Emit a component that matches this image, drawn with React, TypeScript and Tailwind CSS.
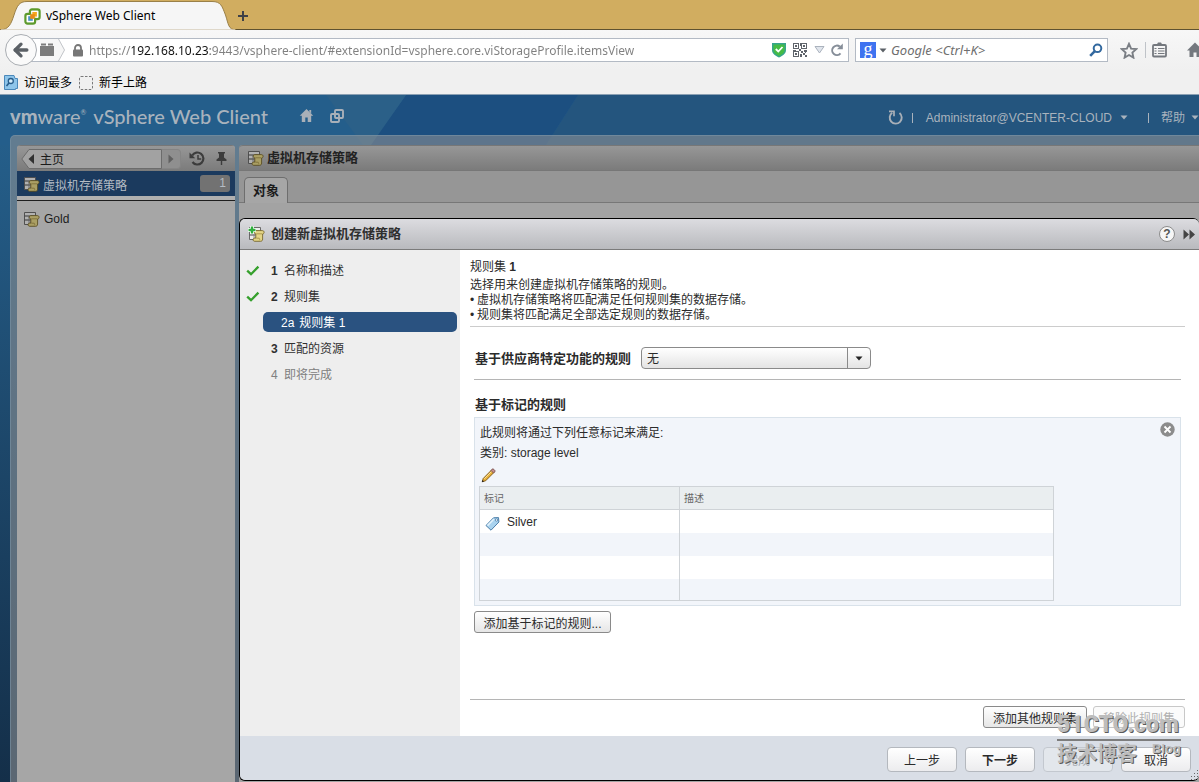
import React from "react";
import { ArrowLeft } from "lucide-react";

const UI = "font-['Liberation_Sans','Noto_Sans_CJK_SC',sans-serif]";
const CHROME = "font-['Noto_Sans','Noto_Sans_CJK_SC',sans-serif]";

function PolicyIcon({ add = false }: { add?: boolean }) {
  return (
    <svg
      width="17"
      height="16"
      viewBox="0 0 17 16"
      aria-hidden="true"
      className={add ? "shrink-0" : "shrink-0 brightness-75"}
    >
      <path d="M1.500 1.500h11v12h-11z" fill="#bdbdbd" stroke="#6a6a6a" />
      <path d="M2 2h10v2.500H2z" fill="#ececec" />
      <path d="M2 5.500h3v3H2zM2 9.500h3V13H2z" fill="#ececec" />
      <path d="M1.500 5h10M1.500 9h6" stroke="#5e5e5e" />
      <path
        d="M8 4.600h6.300c1.200 0 1.800.8 1.800 1.700S15.500 8 14.600 8v5c0 1.400-.7 2.300-2 2.300H6.800c-1.100 0-1.700-.7-1.700-1.600s.6-1.600 1.700-1.600h1V7.900c-1-.1-1.500-.8-1.500-1.600 0-1 .7-1.700 1.700-1.700z"
        fill="#e3d486"
        stroke="#6d5c22"
        strokeWidth=".8"
      />
      <path d="M8.300 12.200h2.900c.6.600.6 1.300.2 2M8.300 7.800h5.900" stroke="#a08c42" strokeWidth=".8" fill="none" />
      {add && (
        <>
          <path d="M4 0v8M0 4h8" stroke="#fff" strokeWidth="4" />
          <path d="M4 .5v7M.5 4h7" stroke="#2fae3e" strokeWidth="2.400" />
        </>
      )}
    </svg>
  );
}

function VsphereIcon() {
  return (
    <svg width="17" height="17" viewBox="0 0 17 17" aria-hidden="true">
      <rect x="6" y="1.5" width="9.5" height="9.5" rx="2" fill="#fff" stroke="#5d9a2c" strokeWidth="2.4" />
      <rect x="1.5" y="6" width="9.5" height="9.5" rx="2" fill="#fff" stroke="#5d9a2c" strokeWidth="2.4" />
      <path d="M7.200 2.700h7.100v7.100H10v4.500H2.700V7.200h4.500z" fill="#fff" />
      <rect x="8.300" y="4" width="4.600" height="4.600" fill="#f4a81d" />
      <rect x="4.200" y="8.200" width="4.600" height="4.600" fill="#4a93c6" />
      <rect x="6.200" y="6.200" width="4.600" height="4.600" fill="#e88d14" />
    </svg>
  );
}

function HomeGlyph({ size, color }: { size: number; color: string }) {
  return (
    <svg width={size} height={size} viewBox="0 0 16 16" aria-hidden="true">
      <path d="M8 1 0.8 8.2h2.2V15h3.7v-5h2.6v5H13V8.2h2.2z" fill={color} />
      <path d="M11 2h2v4l-2-2z" fill={color} />
    </svg>
  );
}

function Caret({ color }: { color: string }) {
  return (
    <svg width="8" height="5" viewBox="0 0 8 5" aria-hidden="true">
      <path d="M0.5 0.5h7L4 4.5z" fill={color} />
    </svg>
  );
}

function Check() {
  return (
    <svg width="14" height="12" viewBox="0 0 14 12" aria-hidden="true">
      <path d="M1.2 5.6 5 9.2 12.4 1.6" fill="none" stroke="#35a02c" strokeWidth="2.3" />
    </svg>
  );
}

function BrowserChrome() {
  return (
    <div className={`${CHROME} text-black`}>
      <div className="flex h-[30px] items-stretch border-b border-[#5f5230] bg-[#d1ad60]">
        <div className="relative h-[30px] w-[236px] shrink-0">
          <svg className="absolute inset-0" width="236" height="30" viewBox="0 0 236 30" aria-hidden="true">
            <path
              d="M0 30C9 29.500 11 24 14 15 17 6 19 1.500 27 1.500H212C221 1.500 222 6 225.500 15 228.500 24 228 29.500 236 30z"
              fill="#f6f6f6"
              stroke="#9a8048"
              strokeWidth="1"
            />
            <path d="M1 30.500H235" stroke="#f6f6f6" strokeWidth="2" />
          </svg>
          <div className="relative flex h-full items-center gap-[5px] pt-0.5 pl-6">
            <VsphereIcon />
            <span className="text-[12px] leading-4">vSphere Web Client</span>
          </div>
        </div>
        <button type="button" aria-label="新标签页" className="flex w-[14px] items-center justify-center pt-0.5">
          <svg width="12" height="12" viewBox="0 0 12 12" aria-hidden="true">
            <path d="M6 1v10M1 6h10" stroke="#3f4147" strokeWidth="2" />
          </svg>
        </button>
      </div>

      <div className="flex h-10 items-center overflow-hidden bg-linear-to-b from-[#f7f7f7] to-[#f0f0f0] pl-[5px]">
        <button
          type="button"
          aria-label="后退"
          className="z-10 flex size-8 shrink-0 items-center justify-center rounded-full border border-[#a9adb2] bg-[#fafafa]"
        >
          <ArrowLeft size={20} strokeWidth={4} color="#5b6066" />
        </button>
        <div className="-ml-2 flex h-6 min-w-0 flex-1 items-center border border-[#b3bac4] bg-white pl-[10px]">
          <svg width="26" height="22" viewBox="0 0 26 22" aria-hidden="true" className="shrink-0">
            <path d="M0 0h19l6 11-6 11H0z" fill="#f6f6f6" />
            <path d="M18.500 0 24.500 11l-6 11" fill="none" stroke="#c3c6ca" />
            <path d="M0 7h14v10H0zM1 4.500h5v2H1zM8 4.500h5v2H8z" fill="#7c7c7c" />
          </svg>
          <svg width="12" height="13" viewBox="0 0 12 13" aria-hidden="true" className="ml-[6px] shrink-0">
            <rect x="1" y="5.500" width="10" height="7" rx="1" fill="#777" />
            <path d="M3 6V4a3 3 0 0 1 6 0v2" fill="none" stroke="#777" strokeWidth="1.800" />
          </svg>
          <input
            aria-label="地址"
            readOnly
            value="https://192.168.10.23:9443/vsphere-client/#extensionId=vsphere.core.viStorageProfile.itemsView"
            className="ml-[5px] h-[22px] min-w-0 flex-1 bg-[linear-gradient(90deg,#808080_43px,#111_43px,#111_121px,#808080_121px)] bg-clip-text pt-px text-[12px] leading-5 text-transparent outline-none"
          />
          <div className="flex items-center gap-1 pr-1">
            <svg width="16" height="16" viewBox="0 0 16 16" aria-hidden="true">
              <path d="M1 1h14v7c0 4-4 6-7 7.500C5 14 1 12 1 8z" fill="#36a58c" />
              <path d="M2.500 2.500h11V8c0 3-3 4.800-5.500 6C5.500 12.800 2.500 11 2.500 8z" fill="#45bb45" />
              <path d="M4.800 7 7.300 9.500 11.500 5" fill="none" stroke="#fff" strokeWidth="1.800" />
            </svg>
            <svg width="14" height="14" viewBox="0 0 14 14" aria-hidden="true" shapeRendering="crispEdges" className="mx-[2px]">
              <path d="M.5.500h5v5h-5zM8.500.500h5v5h-5zM.5 8.500h5v5h-5z" fill="none" stroke="#5f646b" />
              <path d="M2 2h2v2H2zM10 2h2v2h-2zM2 10h2v2H2zM7 0h1v3H7zM6 6h2v2H6zM8 8h2v2H8zM11 7h3v2h-3zM10 10h2v2h-2zM12 12h2v2h-2zM7 11h2v3H7zM12 9h1v1h-1zM0 6.500h3v1H0z" fill="#5f646b" />
            </svg>
            <svg width="11" height="8" viewBox="0 0 11 8" aria-hidden="true" className="mx-px">
              <path d="M1 .500h9L5.500 7z" fill="#e0e5ec" stroke="#aab2bd" />
            </svg>
            <svg width="14" height="14" viewBox="0 0 14 14" aria-hidden="true">
              <path d="M10.500 10.300A4.700 4.700 0 1 1 9.800 3.600" fill="none" stroke="#868e99" strokeWidth="2" />
              <path d="M7 6.200h5.800V.500z" fill="#868e99" />
            </svg>
          </div>
        </div>
        <label className="ml-[6px] flex h-6 w-[253px] shrink-0 items-center border border-[#b3bac4] bg-white pr-1 pl-1">
          <span className="flex size-4 items-center justify-center bg-[#3f73f0] pb-[3px] font-['Liberation_Serif',serif] text-[18px] leading-4 text-white">
            g
          </span>
          <span className="mx-[3px]">
            <Caret color="#5b6066" />
          </span>
          <input
            aria-label="搜索"
            placeholder="Google <Ctrl+K>"
            className="ml-px h-5 min-w-0 flex-1 text-[13px] italic outline-none placeholder:text-[#6e6e6e]"
          />
          <svg width="14" height="14" viewBox="0 0 14 14" aria-hidden="true">
            <circle cx="8.500" cy="5.300" r="3.800" fill="none" stroke="#33699f" strokeWidth="2" />
            <path d="M5.800 8.200 1.200 12.800" stroke="#33699f" strokeWidth="2.600" />
          </svg>
        </label>
        <div className="flex shrink-0 items-center pl-3">
          <svg width="18" height="17" viewBox="0 0 18 17" aria-hidden="true">
            <path
              d="m9 1.800 2.100 4.800 5.100.5-3.800 3.500 1 5L9 13l-4.400 2.600 1-5L1.800 7.100l5.100-.5z"
              fill="none"
              stroke="#7a7e84"
              strokeWidth="1.900"
            />
          </svg>
          <span className="ml-[7px] h-4 w-px bg-[#bfc3c8]" />
          <svg width="15" height="16" viewBox="0 0 15 16" aria-hidden="true" className="ml-[6px]">
            <rect x="1" y="3" width="13" height="11.500" rx="1" fill="none" stroke="#74787e" strokeWidth="1.800" />
            <path d="M4.500 3h6L9 .500H6z" fill="#74787e" />
            <path d="M2.500 6.500h2M6 6.500h6.500M2.500 9h2M6 9h6.500M2.500 11.500h2M6 11.500h6.500" stroke="#74787e" strokeWidth="1.200" />
          </svg>
          <span className="ml-5 w-3 overflow-hidden">
            <svg width="16" height="16" viewBox="0 0 16 16" aria-hidden="true">
              <path d="M8 .500 0 8.500h2.500V15h4v-4.500h3V15h4V8.500H16z" fill="#74787e" />
            </svg>
          </span>
        </div>
      </div>

      <nav className="flex h-[25px] items-center border-b border-[#8ba0b3] bg-[#f0f0f0] pt-px pl-1 text-[12px] leading-4">
        <a href="#most" className="flex items-center gap-[6px]">
          <svg width="14" height="15" viewBox="0 0 14 15" aria-hidden="true">
            <path d="M.5.500h9.500l1 3h2.500v10h-2v1H.500z" fill="#8ec5ea" stroke="#4b88ba" />
            <circle cx="6.800" cy="6" r="2.500" fill="#d4ecfa" stroke="#275d8c" strokeWidth="1.300" />
            <path d="m5 8-2.500 3" stroke="#275d8c" strokeWidth="1.600" />
          </svg>
          访问最多
        </a>
        <a href="#start" className="ml-[7px] flex items-center gap-[6px]">
          <svg width="14" height="14" viewBox="0 0 14 14" aria-hidden="true">
            <rect x=".5" y=".5" width="13" height="13" rx="1.500" fill="none" stroke="#7a7a7a" strokeDasharray="2.500 1.500" />
          </svg>
          新手上路
        </a>
      </nav>
    </div>
  );
}

function AppHeader() {
  return (
    <header className="flex h-10 items-center overflow-hidden pt-px text-[#a9b3bd]">
      <div className="flex flex-1 items-center pl-[10px]">
        <h1 className="flex items-baseline font-['Lato','Liberation_Sans',sans-serif] text-[20px] leading-6 whitespace-nowrap">
          <span className="font-black">vm</span>
          <span>ware</span>
          <sup className="self-start text-[7px] leading-6">®</sup>
          <span className="ml-[7px] font-medium">vSphere Web Client</span>
        </h1>
        <a href="#home" aria-label="主页" className="ml-[31px]">
          <HomeGlyph size={15} color="#a9b0b8" />
        </a>
        <a href="#launch" aria-label="新窗口" className="ml-4">
          <svg width="14" height="14" viewBox="0 0 14 14" aria-hidden="true">
            <rect x="5" y="1" width="8" height="8" rx="1" fill="none" stroke="#a9b0b8" strokeWidth="1.900" />
            <rect x="1" y="5" width="8" height="8" rx="1" fill="none" stroke="#a9b0b8" strokeWidth="1.900" />
          </svg>
        </a>
      </div>
      <div className="flex shrink-0 items-center pt-1 text-[12px] leading-4">
        <button type="button" aria-label="刷新">
          <svg width="15" height="15" viewBox="0 0 15 15" aria-hidden="true">
            <path d="M4.200 2.800A6 6 0 1 0 11.500 3" fill="none" stroke="#a9b0b8" strokeWidth="1.900" />
            <path d="M1 1.300h5v5" fill="none" stroke="#a9b0b8" strokeWidth="1.700" />
          </svg>
        </button>
        <span className="ml-[9px] h-[10px] w-px bg-[#a9b3bd]" />
        <button type="button" className="ml-[13px] flex items-center gap-2">
          Administrator@VCENTER-CLOUD
          <Caret color="#a9b3bd" />
        </button>
        <span className="ml-5 h-[10px] w-px bg-[#a9b3bd]" />
        <button type="button" className="ml-3 flex items-center gap-[6px]">
          帮助
          <Caret color="#a9b3bd" />
        </button>
      </div>
    </header>
  );
}

function Navigator() {
  return (
    <aside className="flex w-[218px] shrink-0 flex-col overflow-hidden rounded-t-[4px] bg-[#a6a6a6]">
      <div className="flex h-[26px] items-center border-t border-[#777] bg-linear-to-b from-[#979797] to-[#7b7b7b] pl-1">
        <button type="button" className="relative flex h-5 w-[141px] items-center">
          <svg className="absolute inset-0" width="141" height="20" viewBox="0 0 141 20" aria-hidden="true">
            <path d="M.8 10 8 .500H140.500v19H8z" fill="#a2a2a2" stroke="#6c6c6c" />
            <path d="M7.500 10 13 5v10z" fill="#303030" />
          </svg>
          <span className="relative pt-0.5 pl-[19px] text-[12px] leading-4 text-[#1a1a1a]">主页</span>
        </button>
        <button
          type="button"
          aria-label="前进"
          className="flex h-5 w-[19px] items-center justify-center rounded-r-[4px] border border-l-0 border-[#858585] bg-[#8f8f8f]"
        >
          <svg width="6" height="10" viewBox="0 0 6 10" aria-hidden="true">
            <path d="M.5.500 5.500 5l-5 4.500z" fill="#606060" />
          </svg>
        </button>
        <button type="button" aria-label="历史记录" className="ml-2">
          <svg width="17" height="15" viewBox="0 0 17 15" aria-hidden="true">
            <path d="M3.200 4.500A6 6 0 1 1 3.500 11" fill="none" stroke="#3c3c3c" strokeWidth="2.200" />
            <path d="M.5 1.500v5.800h5.700z" fill="#3c3c3c" />
            <path d="M9 4v4h3.200" fill="none" stroke="#3c3c3c" strokeWidth="1.500" />
          </svg>
        </button>
        <button type="button" aria-label="固定" className="ml-[10px]">
          <svg width="11" height="13" viewBox="0 0 11 13" aria-hidden="true">
            <path d="M2 0h7v1.500H8v4l2.500 2V9h-4.300v4H4.800V9H.500V7.500L3 5.500v-4H2z" fill="#3c3c3c" />
          </svg>
        </button>
      </div>
      <a href="#policies" className="flex h-[25px] items-center bg-[#1b3a5e] pr-[5px] pl-[6px] text-[12px] leading-4 text-[#b5bcc4]">
        <PolicyIcon />
        <span className="flex-1 pt-1 pl-[3px]">虚拟机存储策略</span>
        <span className="h-[17px] w-[30px] rounded-[3px] bg-[#727272] pr-1 text-right leading-[17px]">1</span>
      </a>
      <div className="h-1 bg-[#b0b0b0]" />
      <div className="h-px bg-[#1e1e1e]" />
      <a href="#gold" className="flex h-[35px] items-center gap-[4px] pl-[6px] text-[12px] leading-4 text-[#1c1c1c]">
        <PolicyIcon />
        Gold
      </a>
    </aside>
  );
}

const steps = [
  { no: "1", label: "名称和描述", done: true },
  { no: "2", label: "规则集", done: true },
  { no: "2a", label: "规则集 1", current: true },
  { no: "3", label: "匹配的资源" },
  { no: "4", label: "即将完成", disabled: true },
];

function StepNav() {
  return (
    <nav className="w-[220px] shrink-0 bg-[#eeeeee] pt-[7px]">
      <ol className="text-[12px] leading-4">
        {steps.map((s) => (
          <li key={s.no} className="flex h-[26px] items-center pl-[6px]">
            {s.current ? (
              <a
                href="#2a"
                aria-current="step"
                className="mr-[3px] ml-[17px] flex h-5 flex-1 items-center gap-[5px] rounded-[5px] bg-[#2a5280] pt-0.5 pl-[18px] text-white"
              >
                <span>{s.no}</span>
                {s.label}
              </a>
            ) : (
              <a
                href="#step"
                className={s.disabled ? "flex items-center pt-0.5 text-[#808080]" : "flex items-center pt-0.5 text-[#303030]"}
              >
                <span className="w-[25px]">{s.done && <Check />}</span>
                <span className={s.disabled ? "w-[13px]" : "w-[13px] font-bold"}>{s.no}</span>
                <span>{s.label}</span>
              </a>
            )}
          </li>
        ))}
      </ol>
    </nav>
  );
}

function TagTable() {
  return (
    <table className="w-[575px] table-fixed border-collapse border border-[#cfd3d7] bg-white text-left">
      <colgroup>
        <col className="w-[200px]" />
        <col />
      </colgroup>
      <thead>
        <tr className="h-[23px] bg-[#eaeef0] text-[10px] leading-3 text-[#666]">
          <th className="border border-[#cfd3d7] px-1 pt-0.5 font-normal">标记</th>
          <th className="border border-[#cfd3d7] px-1 pt-0.5 font-normal">描述</th>
        </tr>
      </thead>
      <tbody>
        <tr className="h-[23px]">
          <td className="border-r border-[#cfd3d7] pt-px pl-[5px]">
            <span className="flex items-center gap-[7px] text-[12px] leading-4">
              <svg width="15" height="14" viewBox="0 0 15 14" aria-hidden="true" className="mt-1">
                <path d="M8.500.800 13.500.600l.4 4.400L6 13.200 1 8.500z" fill="#a9d3ef" stroke="#4b7da8" />
                <path d="M9 2 2.500 8.600" stroke="#e4f3fc" strokeWidth="1.500" />
                <circle cx="11.500" cy="3" r="1.200" fill="#fff" stroke="#4b7da8" strokeWidth=".8" />
              </svg>
              Silver
            </span>
          </td>
          <td />
        </tr>
        <tr className="h-[23px] bg-[#f2f5fa]">
          <td className="border-r border-[#cfd3d7]" />
          <td />
        </tr>
        <tr className="h-[23px]">
          <td className="border-r border-[#cfd3d7]" />
          <td />
        </tr>
        <tr className="h-[22px] bg-[#f2f5fa]">
          <td className="border-r border-[#cfd3d7]" />
          <td />
        </tr>
      </tbody>
    </table>
  );
}

function RuleSetForm() {
  return (
    <main className="flex min-w-0 flex-1 flex-col bg-white pt-[9px] pr-[14px] pl-[10px] text-[12px] text-[#2b2b2b]">
      <h3 className="leading-4">
        规则集 <b>1</b>
      </h3>
      <div className="mt-[3px] border-b border-[#cccccc] pb-[3px] leading-[15px]">
        <p>选择用来创建虚拟机存储策略的规则。</p>
        <ul>
          <li>
            <span className="inline-block w-[7px]">•</span>虚拟机存储策略将匹配满足任何规则集的数据存储。
          </li>
          <li>
            <span className="inline-block w-[7px]">•</span>规则集将匹配满足全部选定规则的数据存储。
          </li>
        </ul>
      </div>
      <div className="flex-1 pr-1 pl-1">
        <div className="flex items-center border-b border-[#b5b5b5] pt-5 pb-[10px]">
          <label htmlFor="vendor" className="pt-px pl-px text-[13px] leading-4 font-bold">
            基于供应商特定功能的规则
          </label>
          <div className="relative ml-[10px]">
            <select
              id="vendor"
              className="h-[22px] w-[230px] appearance-none rounded-[4px] border border-[#8a8a8a] bg-linear-to-b from-white to-[#e4e4e4] pt-px pl-[5px] text-[12px] leading-5"
            >
              <option>无</option>
            </select>
            <span className="pointer-events-none absolute inset-y-px right-px flex w-[23px] items-center justify-center border-l border-[#8a8a8a]">
              <Caret color="#222" />
            </span>
          </div>
        </div>
        <h4 className="pt-[17px] pl-px text-[13px] leading-4 font-bold">基于标记的规则</h4>
        <section className="mt-1 border border-[#d9e2ea] bg-[#f2f5fa] pb-1 pl-1">
          <div className="flex justify-between pr-[5px]">
            <div className="pt-[7px] pl-px leading-4">
              <p>此规则将通过下列任意标记来满足:</p>
              <p className="mt-1">类别: storage level</p>
            </div>
            <button type="button" aria-label="移除" className="mt-1 size-[15px]">
              <svg width="15" height="15" viewBox="0 0 15 15" aria-hidden="true">
                <circle cx="7.500" cy="7.500" r="7.200" fill="#8c8c8c" />
                <path d="m4.500 4.500 6 6m0-6-6 6" stroke="#fff" strokeWidth="1.800" />
              </svg>
            </button>
          </div>
          <button type="button" aria-label="编辑" className="mt-[7px] mb-[3px] ml-[2px] block">
            <svg width="15" height="15" viewBox="0 0 15 15" aria-hidden="true">
              <path d="m1.300 13.700.9-3.200L10.800 1.800 13.200 4.200 4.600 12.800z" fill="#e9b23a" stroke="#7a5210" strokeWidth=".9" />
              <path d="m3.300 10.700 8-8" stroke="#fbe19a" strokeWidth="1" />
              <path d="m10 2.500 1.200-1.300c.6-.5 1-.4 1.500.1l1 1c.5.500.6.900.1 1.500L12.500 5z" fill="#c58d8d" stroke="#6d4545" strokeWidth=".8" />
              <path d="m.8 14.200.7-2.200 1.500 1.500z" fill="#222" />
            </svg>
          </button>
          <TagTable />
        </section>
        <button
          type="button"
          className="mt-[5px] h-[22px] w-[137px] rounded-[3px] border border-[#8a8a8a] bg-linear-to-b from-white to-[#e6e6e6] pt-0.5 leading-5"
        >
          添加基于标记的规则...
        </button>
      </div>
      <div className="flex justify-end gap-[6px] border-t border-[#b5b5b5] pt-[6px] pb-2">
        <button
          type="button"
          className="h-[22px] w-[104px] rounded-[3px] border border-[#8a8a8a] bg-linear-to-b from-white to-[#e6e6e6] pt-0.5 leading-5"
        >
          添加其他规则集
        </button>
        <button
          type="button"
          disabled
          className="h-[22px] w-[92px] rounded-[3px] border border-[#c8c8c8] bg-[#fbfbfb] pt-0.5 leading-5 text-[#b0b0b0]"
        >
          移除此规则集
        </button>
      </div>
    </main>
  );
}

const footerButton =
  "h-[25px] w-[70px] rounded-[4px] border border-[#b4b8be] bg-linear-to-b from-white to-[#ececee] pt-[3px]";

function Watermark() {
  return (
    <div
      aria-hidden="true"
      className="pointer-events-none absolute right-[18px] bottom-[14px] w-[124px] text-[#bdbdbd] [text-shadow:1px_1px_0_#5a5a5a]"
    >
      <div className="border-b-2 border-[#7d7d7d] font-['Roboto','Liberation_Sans',sans-serif] text-[23px] leading-7 font-black">
        51CTO.com
      </div>
      <div className="flex items-start justify-between font-bold">
        <span className="pt-px text-[20px] leading-6">技术博客</span>
        <span className="text-[13px] leading-4">Blog</span>
      </div>
    </div>
  );
}

function WizardDialog() {
  return (
    <section
      role="dialog"
      aria-label="创建新虚拟机存储策略"
      className="relative mt-[15px] mb-px flex flex-1 flex-col overflow-hidden rounded-[6px] border border-r-0 border-black"
    >
      <div className="flex h-[31px] items-center border-b border-[#7b7b7b] bg-linear-to-b from-[#dcdce0] to-[#b9babe] pr-1 pl-2">
        <PolicyIcon add />
        <h2 className="flex-1 pl-[6px] text-[13px] leading-4 font-bold text-[#2f2f2f]">创建新虚拟机存储策略</h2>
        <button
          type="button"
          aria-label="帮助"
          className="size-4 rounded-full border border-[#8c8c8c] bg-[#f6f6f6] text-center text-[12px] leading-[14px] font-bold text-[#555]"
        >
          ?
        </button>
        <button type="button" aria-label="展开" className="ml-2">
          <svg width="12" height="11" viewBox="0 0 12 11" aria-hidden="true">
            <path d="M.5.500 6 5.500l-5.500 5zM6.500.500l5.500 5-5.500 5z" fill="#444" />
          </svg>
        </button>
      </div>
      <div className="flex flex-1">
        <StepNav />
        <RuleSetForm />
      </div>
      <div className="flex h-11 items-center justify-end gap-2 bg-[#d9dee6] pt-0.5 pr-2 text-[12px] leading-5 text-[#2b2b2b]">
        <button type="button" className={footerButton}>
          上一步
        </button>
        <button type="button" className={`${footerButton} font-bold`}>
          下一步
        </button>
        <button
          type="button"
          disabled
          className="h-[25px] w-[70px] rounded-[4px] border border-[#c3c8cf] bg-[#e3e7ec] pt-[3px] text-[#a6abb2]"
        >
          完成
        </button>
        <button type="button" className={footerButton}>
          取消
        </button>
      </div>
      <svg width="10" height="10" viewBox="0 0 10 10" aria-hidden="true" className="absolute right-0 bottom-0">
        <path
          d="M8 0h1v1H8zM8 3h1v1H8zM5 3h1v1H5zM8 6h1v1H8zM5 6h1v1H5zM2 6h1v1H2zM8 9h1v1H8zM5 9h1v1H5zM2 9h1v1H2z"
          fill="#666"
        />
      </svg>
      <Watermark />
    </section>
  );
}

export default function App() {
  return (
    <div className="flex min-h-screen flex-col">
      <BrowserChrome />
      <div className={`${UI} relative flex flex-1 flex-col bg-linear-to-b from-[#26628f] to-[#142f49]`}>
        <div className="absolute inset-x-0 top-0 h-[50px] overflow-hidden bg-[#24557e]">
          <svg width="600" height="50" viewBox="0 0 600 50" aria-hidden="true">
            <path d="M0 0h578L546 50H0z" fill="#245e8b" />
            <path d="M406 0h172L546 50H370z" fill="#1c4f80" />
            <path d="M326 0h80L371 50h-8z" fill="#2b6088" />
          </svg>
        </div>
        <div className="relative flex flex-1 flex-col">
          <AppHeader />
          <div className="ml-[10px] flex flex-1 gap-1 rounded-tl-[5px] border-t border-l border-[#7b93a6]/60 bg-[#969696]/55 pt-[9px] pl-[6px]">
            <Navigator />
            <div className="flex min-w-0 flex-1 flex-col rounded-tl-[4px] bg-[#a3a3a3]">
              <div className="flex h-[26px] items-center gap-[3px] rounded-tl-[4px] border-t border-b border-[#777] bg-linear-to-b from-[#979797] to-[#7b7b7b] pl-2">
                <PolicyIcon />
                <h2 className="text-[13px] leading-4 font-bold text-[#222]">虚拟机存储策略</h2>
              </div>
              <div className="flex h-8 items-end border-b border-[#777] bg-[#969696] pl-[5px]">
                <button
                  type="button"
                  className="-mb-px h-[26px] w-11 rounded-t-[5px] border border-b-0 border-[#6e6e6e] bg-[#a6a6a6] text-[13px] leading-5 font-bold text-[#1c1c1c]"
                >
                  对象
                </button>
              </div>
              <WizardDialog />
            </div>
          </div>
        </div>
      </div>
    </div>
  );
}
